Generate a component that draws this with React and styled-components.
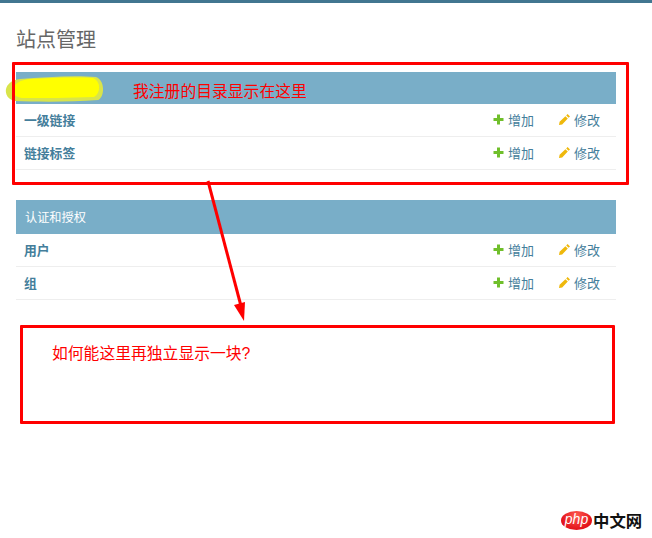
import React from "react";
import styled, { createGlobalStyle } from "styled-components";

const GlobalStyle = createGlobalStyle`
  html, body {
    margin: 0;
    padding: 0;
    background: #fff;
  }
  body {
    font-family: "Liberation Sans", "Noto Sans CJK SC", sans-serif;
    font-size: 13px;
  }
`;

const Page = styled.div`
  position: relative;
  width: 652px;
  height: 538px;
  overflow: hidden;
  border-top: 3px solid #417690;
  box-sizing: border-box;
`;

const Content = styled.main`
  display: flex;
  flex-direction: column;
  width: 600px;
  padding: 0 0 0 16px;
`;

const Title = styled.h1`
  margin: 25px 0 19px;
  height: 25px;
  font-size: 20px;
  line-height: 25px;
  font-weight: 400;
  color: #666;
`;

const Module = styled.section`
  margin-bottom: 30px;
`;

const Caption = styled.div`
  height: ${(p) => p.$height}px;
  padding-left: 9px;
  background: #79aec8;
  color: #fff;
  font-size: 12.2px;
  line-height: ${(p) => p.$height + 2}px;
`;

const Row = styled.div`
  display: flex;
  align-items: center;
  height: 30px;
  padding: 0 16px 2px 8px;
  border-bottom: 1px solid #eee;
`;

const Name = styled.a`
  flex: 1;
  color: #447e9b;
  font-weight: 700;
  font-size: 12.8px;
`;

const Action = styled.a`
  display: flex;
  align-items: center;
  gap: 4px;
  margin-left: 25px;
  color: #447e9b;
  font-size: 13px;
`;

const Annotation = styled.div`
  position: absolute;
  left: ${(p) => p.$x}px;
  top: ${(p) => p.$y}px;
  width: ${(p) => p.$w}px;
  height: ${(p) => p.$h}px;
  box-sizing: border-box;
  border: 3px solid #f00;
  border-radius: 1px;
`;

const Note = styled.div`
  position: absolute;
  left: ${(p) => p.$x}px;
  top: ${(p) => p.$y}px;
  color: #f00;
  font-size: 15.8px;
  line-height: 20px;
  white-space: nowrap;
`;

const Overlay = styled.svg`
  position: absolute;
  left: 0;
  top: -3px;
`;

const Watermark = styled.div`
  position: absolute;
  left: 561px;
  top: 505px;
  display: flex;
  align-items: center;
  gap: 1px;
`;

const PhpBadge = styled.span`
  width: 31px;
  height: 19px;
  border-radius: 50%;
  background: radial-gradient(ellipse at 50% 25%, #ff5a50, #e3131b 70%);
  color: #fff;
  font-family: "Liberation Sans", sans-serif;
  font-style: italic;
  font-size: 14px;
  line-height: 17px;
  text-align: center;
`;

const SiteName = styled.span`
  color: #111;
  font-weight: 700;
  font-size: 16.4px;
`;

const PlusIcon = () => (
  <svg width="11" height="11" viewBox="0 0 11 11">
    <path d="M4 0.5h3v3.5h3.5v3H7v3.5H4V7H0.5V4H4z" fill="#70bf2b" />
  </svg>
);

const PencilIcon = () => (
  <svg width="11" height="11" viewBox="0 0 11 11">
    <path d="M8.6 0l2.4 2.4-1.4 1.4-2.4-2.4zM6.4 2.2l2.4 2.4-5.6 5.8L0 11l0.6-3.2z" fill="#efb80b" />
  </svg>
);

const modules = [
  { caption: "", height: 32, rows: ["一级链接", "链接标签"] },
  { caption: "认证和授权", height: 34, rows: ["用户", "组"] },
];

export default function App() {
  return (
    <Page>
      <GlobalStyle />
      <Content>
        <Title>站点管理</Title>
        {modules.map((m) => (
          <Module key={m.rows[0]}>
            <Caption $height={m.height}>{m.caption}</Caption>
            {m.rows.map((name) => (
              <Row key={name}>
                <Name>{name}</Name>
                <Action>
                  <PlusIcon />
                  增加
                </Action>
                <Action>
                  <PencilIcon />
                  修改
                </Action>
              </Row>
            ))}
          </Module>
        ))}
      </Content>

      <Overlay width="652" height="538" viewBox="0 0 652 538">
        <path
          d="M6 89C7 84 12 80 20 79C45 77 75 75 96 77C105 80 105 97 98 100C72 102 40 102 14 101C8 99 5 94 6 89Z"
          fill="#d9e44a"
        />
        <path
          d="M13 89C15 83 20 80 30 79C50 78 75 77 93 78C101 81 101 93 94 97C70 98 40 98 22 98C15 97 12 93 13 89Z"
          fill="#ff0"
        />
        <path d="M208 181L241 306" stroke="#f00" strokeWidth="3" fill="none" />
        <path d="M234 305L245 302L244 321Z" fill="#f00" />
      </Overlay>
      <Annotation $x={12} $y={59} $w={617} $h={123} />
      <Annotation $x={20} $y={322} $w={595} $h={99} />
      <Note $x={133} $y={79}>我注册的目录显示在这里</Note>
      <Note $x={52} $y={341}>如何能这里再独立显示一块?</Note>

      <Watermark>
        <PhpBadge>php</PhpBadge>
        <SiteName>中文网</SiteName>
      </Watermark>
    </Page>
  );
}
